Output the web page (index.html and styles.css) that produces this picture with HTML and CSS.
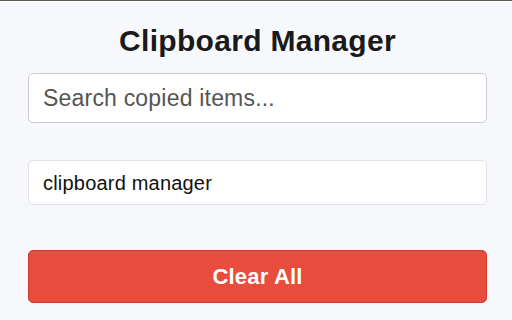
FILE: index.html
```html
<!DOCTYPE html>
<html lang="en">
<head>
  <meta charset="UTF-8">
  <title>Clipboard Manager</title>
  <link rel="stylesheet" href="styles.css">
</head>
<body>
  <div id="container">
    <h1>Clipboard Manager</h1>
    <input type="text" id="search" placeholder="Search copied items...">
    <ul id="clipboardList">
      <li class="clip-item">clipboard manager</li>
    </ul>
    <button id="clearAll">Clear All</button>
  </div>
</body>
</html>
```
FILE: styles.css
```css
html {
  background-color: #ffffff;
}

body {
  font-family: 'Liberation Sans', Arial, sans-serif;
  margin: 0;
  border-top: 1px solid #5a5a52;
  padding: 1px 0 0 0;
  background-color: #ffffff;
}

#container {
  background-color: #f7f8fc;
  padding: 20px 25px 20px 28px;
  min-height: 300px;
  box-sizing: border-box;
}

h1 {
  font-size: 30px;
  font-weight: bold;
  letter-spacing: 0.3px;
  line-height: 31px;
  text-align: center;
  color: #1a1a1a;
  margin: 3px 0 17px 0;
}

#search {
  display: block;
  width: 100%;
  height: 50px;
  padding: 0 14px;
  font-family: inherit;
  font-size: 23px;
  letter-spacing: 0.2px;
  border: 1px solid #cccccc;
  border-radius: 5px;
  background: #ffffff;
  box-sizing: border-box;
}

#search::placeholder {
  color: #555555;
}

#clipboardList {
  list-style: none;
  margin: 37px 0 0 0;
  padding: 0;
}

.clip-item {
  height: 45px;
  line-height: 45px;
  padding: 0 14px;
  font-size: 20px;
  letter-spacing: 0.2px;
  color: #111111;
  background: #ffffff;
  border: 1px solid #e2e2e6;
  border-radius: 5px;
  box-sizing: border-box;
}

#clearAll {
  display: block;
  width: 100%;
  height: 53px;
  margin-top: 45px;
  font-family: inherit;
  font-size: 22px;
  font-weight: bold;
  letter-spacing: 0.2px;
  color: #ffffff;
  background-color: #e74c3c;
  border: 1px solid #cc3b2d;
  border-radius: 5px;
  cursor: pointer;
}
```
